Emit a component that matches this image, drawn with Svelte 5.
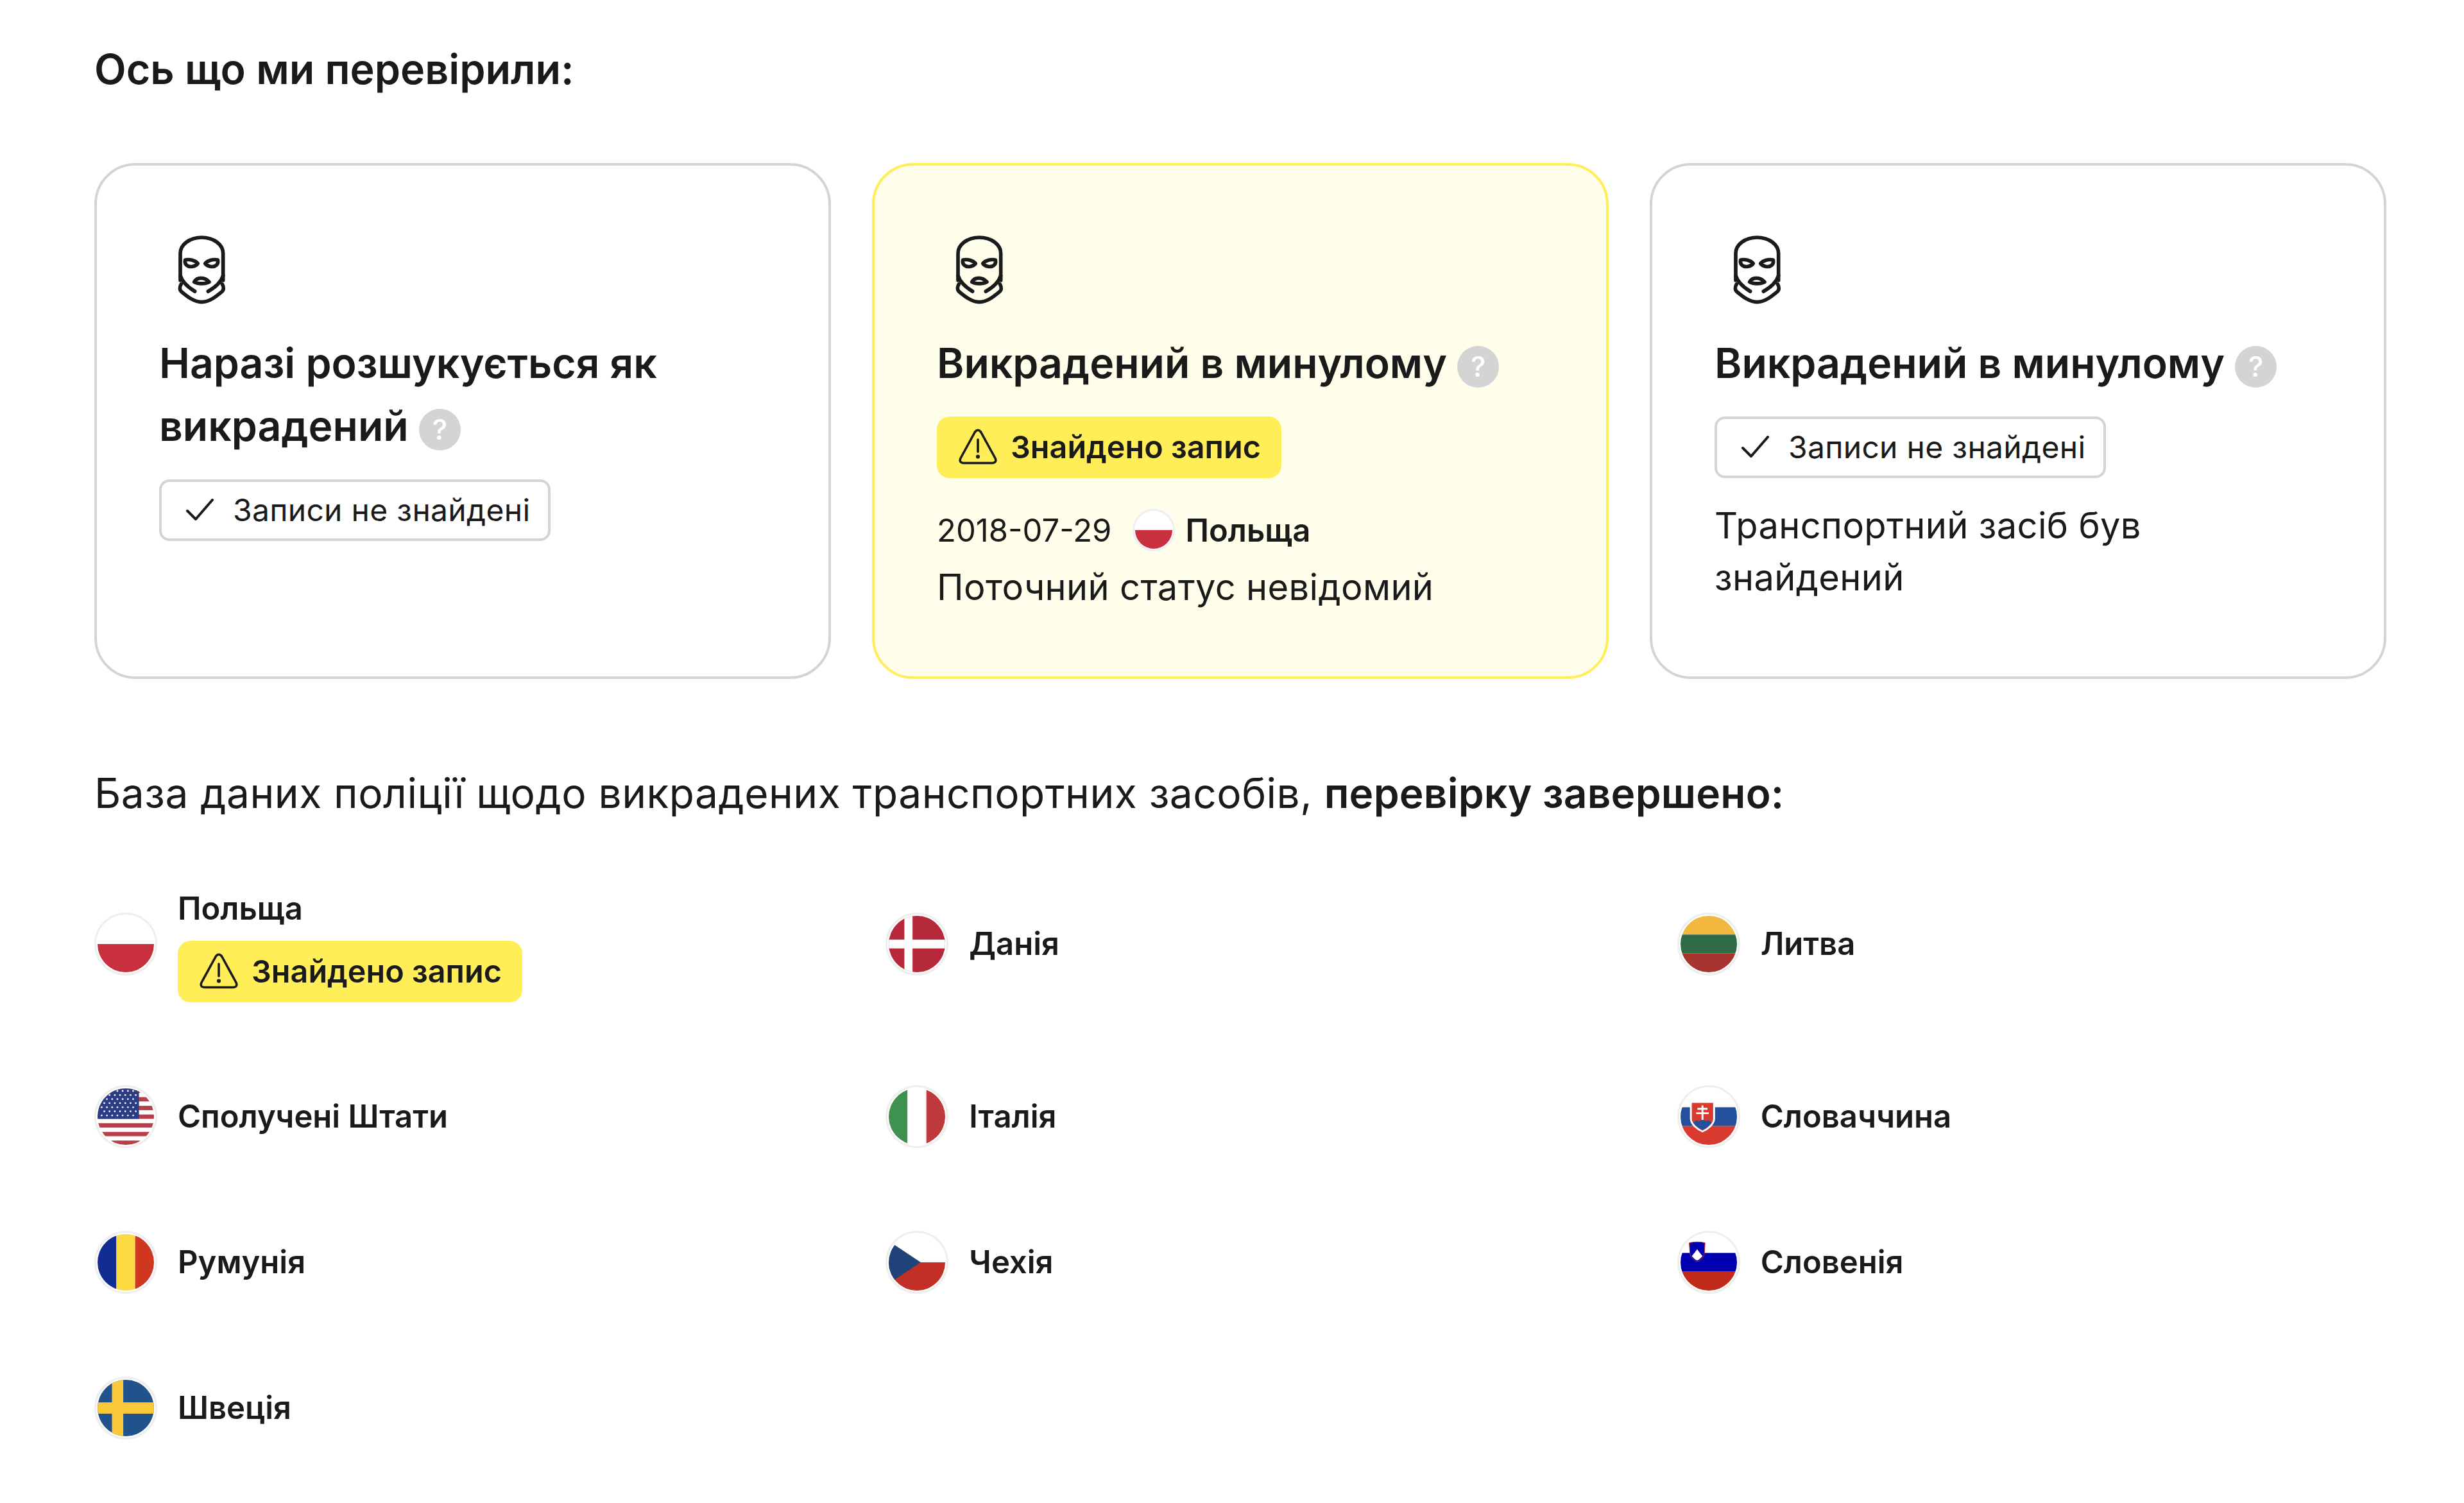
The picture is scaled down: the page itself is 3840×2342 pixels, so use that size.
<script>
  const usStripes = [0,1,2,3,4,5,6];
  const stars = [];
  for (let r = 0; r < 7; r++) for (let c = 0; c < 7; c++) stars.push({ x: 6 + c * 7.6 + (r % 2) * 3.8, y: 4 + r * 6.5 });
  const countries = [
    { id: 'pl', name: 'Польща', found: true },
    { id: 'dk', name: 'Данія' },
    { id: 'lt', name: 'Литва' },
    { id: 'us', name: 'Сполучені Штати' },
    { id: 'it', name: 'Італія' },
    { id: 'sk', name: 'Словаччина' },
    { id: 'ro', name: 'Румунія' },
    { id: 'cz', name: 'Чехія' },
    { id: 'si', name: 'Словенія' },
    { id: 'se', name: 'Швеція' }
  ];
</script>

{#snippet mask()}
  <svg class="mask" viewBox="51 60 360 360" fill="none" stroke="#1a1a1a" stroke-width="17" stroke-linecap="round" stroke-linejoin="round">
    <path d="M150 290V165C150 122 195 90 250 90S350 122 350 165V290" />
    <path d="M150 268C160 300 190 325 218 342M350 268C340 300 310 325 280 342" />
    <path d="M154 308C146 322 146 336 156 344C185 368 215 392 250 392S315 368 344 344C354 336 354 322 346 308" />
    <path d="M173 195C195 190 222 198 232 212C222 226 194 232 180 220C173 214 171 204 173 195Z" />
    <path d="M325 195C303 190 276 198 266 212C276 226 304 232 318 220C325 214 327 204 325 195Z" />
    <path d="M215 298C228 274 264 274 285 298C268 308 232 308 215 298Z" />
  </svg>
{/snippet}

{#snippet warn()}
  <svg class="warn" viewBox="0 0 60 56" fill="none" stroke="#1a1a1a" stroke-width="3.6" stroke-linecap="round" stroke-linejoin="round">
    <path d="M25.5 5Q30 -0.5 34.500 5L57 46Q60 53 52 53.500H8Q0 53 3 46Z" />
    <path d="M30 17V36" />
    <circle cx="30" cy="43.500" r="1.300" fill="#1a1a1a" />
  </svg>
{/snippet}

{#snippet check()}
  <svg class="check" viewBox="0 0 43 34" fill="none" stroke="#1a1a1a" stroke-width="4" stroke-linecap="round" stroke-linejoin="round">
    <path d="M2 19L15 32L41 2" />
  </svg>
{/snippet}

{#snippet help()}
  <span class="help">?</span>
{/snippet}

{#snippet flag(id, small)}
  <span class={small ? 'flag small' : 'flag'}>
    <svg viewBox="0 0 90 90">
      {#if id === 'pl'}
        <rect width="90" height="45" fill="#fff" /><rect y="45" width="90" height="45" fill="#c8303f" />
      {:else if id === 'dk'}
        <rect width="90" height="90" fill="#b5293a" /><rect x="25" width="13" height="90" fill="#fff" /><rect y="38" width="90" height="14" fill="#fff" />
      {:else if id === 'lt'}
        <rect width="90" height="30" fill="#f2b73f" /><rect y="30" width="90" height="30" fill="#2f6b47" /><rect y="60" width="90" height="30" fill="#a83430" />
      {:else if id === 'us'}
        <rect width="90" height="90" fill="#fff" />
        {#each usStripes as s}
          <rect y={s * 13.850} width="90" height="6.920" fill="#b5404a" />
        {/each}
        <rect width="66" height="48.500" fill="#2c3c85" />
        {#each stars as st}
          <circle cx={st.x * 1.1} cy={st.y} r="1.400" fill="#fff" />
        {/each}
      {:else if id === 'it'}
        <rect width="30" height="90" fill="#3f914f" /><rect x="30" width="30" height="90" fill="#fff" /><rect x="60" width="30" height="90" fill="#bd3a3d" />
      {:else if id === 'sk'}
        <rect width="90" height="30" fill="#fff" /><rect y="30" width="90" height="30" fill="#234f9c" /><rect y="60" width="90" height="30" fill="#d93a2f" />
        <path d="M15 20H55V48C55 58 44 66 35 70C26 66 15 58 15 48Z" fill="#fff" />
        <path d="M18 23H52V48C52 56 43 63 35 67C27 63 18 56 18 48Z" fill="#d93a2f" />
        <path d="M33.500 27H36.500V31H43V34H36.500V38H45V41H36.500V51H33.500V41H25V38H33.500V34H27V31H33.500Z" fill="#fff" />
        <path d="M20.500 55C24 50 27 50 29 53C32 49 38 49 41 53C43 50 46 50 49.500 55C46 60 40 64 35 66.500C30 64 24 60 20.500 55Z" fill="#234f9c" />
      {:else if id === 'ro'}
        <rect width="30" height="90" fill="#112d94" /><rect x="30" width="30" height="90" fill="#fbd940" /><rect x="60" width="30" height="90" fill="#cf3720" />
      {:else if id === 'cz'}
        <rect width="90" height="45" fill="#fff" /><rect y="45" width="90" height="45" fill="#c22f26" /><path d="M0 11L51 45L0 79Z" fill="#1f4279" />
      {:else if id === 'si'}
        <rect width="90" height="30" fill="#fff" /><rect y="30" width="90" height="30" fill="#0000b0" /><rect y="60" width="90" height="30" fill="#c12a1b" />
        <path d="M14 14C22 12 32 12 39 14L38 31C37 38 31 42 26.500 44C22 42 16 38 15 31Z" fill="#0000b0" stroke="#c12a1b" stroke-width="1" />
        <path d="M18 35L23 29L26.500 24L30 29L35 35C32 39 29 41 26.500 42C24 41 21 39 18 35Z" fill="#fff" />
      {:else if id === 'se'}
        <rect width="90" height="90" fill="#20528b" /><rect x="23" width="18" height="90" fill="#f9c93a" /><rect y="36" width="90" height="18" fill="#f9c93a" />
      {/if}
    </svg>
  </span>
{/snippet}

<main class="page">
  <h1>Ось що ми перевірили:</h1>

  <section class="cards">
    <article class="card">
      {@render mask()}
      <h2>Наразі розшукується як викрадений {@render help()}</h2>
      <span class="pill ok">{@render check()}Записи не знайдені</span>
    </article>

    <article class="card alert">
      {@render mask()}
      <h2>Викрадений в минулому {@render help()}</h2>
      <span class="pill found">{@render warn()}Знайдено запис</span>
      <div class="record">
        <span>2018-07-29</span>
        {@render flag('pl', true)}
        <strong>Польща</strong>
      </div>
      <p class="status">Поточний статус невідомий</p>
    </article>

    <article class="card">
      {@render mask()}
      <h2>Викрадений в минулому {@render help()}</h2>
      <span class="pill ok">{@render check()}Записи не знайдені</span>
      <p class="note">Транспортний засіб був знайдений</p>
    </article>
  </section>

  <p class="lead">База даних поліції щодо викрадених транспортних засобів, <strong>перевірку завершено:</strong></p>

  <ul class="grid">
    {#each countries as c}
      <li class="country">
        {@render flag(c.id, false)}
        <div class="info">
          <span class="name">{c.name}</span>
          {#if c.found}
            <span class="pill found list">{@render warn()}Знайдено запис</span>
          {/if}
        </div>
      </li>
    {/each}
  </ul>
</main>

<style>
  :global(body) {
    margin: 0;
    background: #fff;
  }
  .page {
    box-sizing: border-box;
    width: 3840px;
    height: 2342px;
    padding: 60px 121px 100px 147px;
    font-family: Inter, "Noto Sans", sans-serif;
    color: #1a1a1a;
  }
  h1 {
    margin: 0;
    font-size: 64.6px;
    line-height: 96px;
    font-weight: 600;
  }
  .cards {
    display: grid;
    grid-template-columns: repeat(3, 1fr);
    gap: 64px;
    margin-top: 98px;
  }
  .card {
    box-sizing: border-box;
    height: 804px;
    padding: 102px 97px 0;
    border: 4px solid #d4d4d4;
    border-radius: 64px;
    display: flex;
    flex-direction: column;
    align-items: flex-start;
  }
  .alert {
    background: #fffeea;
    border-color: #ffee58;
  }
  .mask {
    width: 120px;
    height: 120px;
    flex: none;
    margin-bottom: 37px;
  }
  h2 {
    margin: 0;
    font-size: 64.3px;
    line-height: 98px;
    font-weight: 600;
  }
  .help {
    display: inline-flex;
    align-items: center;
    justify-content: center;
    width: 65px;
    height: 65px;
    margin: -20px 0 -20px 0;
    border-radius: 50%;
    background: #d4d4d4;
    color: #fff;
    font-size: 44px;
    font-weight: 500;
    line-height: 1;
    vertical-align: 2px;
  }
  .pill {
    box-sizing: border-box;
    display: inline-flex;
    align-items: center;
    height: 96px;
    margin-top: 34px;
    padding-bottom: 2px;
    font-size: 48.5px;
    white-space: nowrap;
  }
  .ok {
    padding: 0 28px 2px 38px;
    gap: 30px;
    border: 4px solid #d4d4d4;
    border-radius: 16px;
    background: #fff;
    font-size: 48px;
    letter-spacing: 0.3px;
  }
  .check {
    width: 43px;
    height: 34px;
  }
  .found {
    padding: 0 32px 2px 34px;
    gap: 21px;
    border-radius: 20px;
    background: #ffee58;
    font-weight: 600;
  }
  .found.list {
    margin-top: 0;
  }
  .warn {
    width: 60px;
    height: 56px;
  }
  .record {
    display: flex;
    align-items: center;
    height: 96px;
    margin-top: 34px;
    padding-bottom: 2px;
    box-sizing: border-box;
    font-size: 49px;
  }
  .record strong {
    font-weight: 600;
  }
  .status,
  .note {
    margin: 0;
    font-size: 56px;
    line-height: 81px;
    letter-spacing: 0.35px;
  }
  .note {
    margin-top: 34px;
  }
  .lead {
    margin: 0;
    margin-top: 130px;
    font-size: 64px;
    line-height: 96px;
    letter-spacing: 0.5px;
  }
  .lead strong {
    font-weight: 600;
    letter-spacing: 0.2px;
  }
  .flag {
    box-sizing: border-box;
    flex: none;
    display: block;
    width: 98px;
    height: 98px;
    padding: 2px;
    border: 3px solid #eeeeee;
    border-radius: 50%;
    background: #fff;
  }
  .flag svg {
    display: block;
    width: 100%;
    height: 100%;
    border-radius: 50%;
  }
  .flag.small {
    width: 66px;
    height: 66px;
    margin: 0 16px 0 33px;
    padding: 1px;
  }
  .grid {
    list-style: none;
    margin: 96px 0 0;
    padding: 0;
    display: grid;
    grid-template-columns: repeat(3, 1fr);
    gap: 129px 128px;
  }
  .country {
    display: flex;
    align-items: center;
    gap: 32px;
  }
  .info {
    display: flex;
    flex-direction: column;
    align-items: flex-start;
    gap: 14px;
  }
  .name {
    font-size: 49px;
    line-height: 72px;
    font-weight: 600;
  }
</style>
